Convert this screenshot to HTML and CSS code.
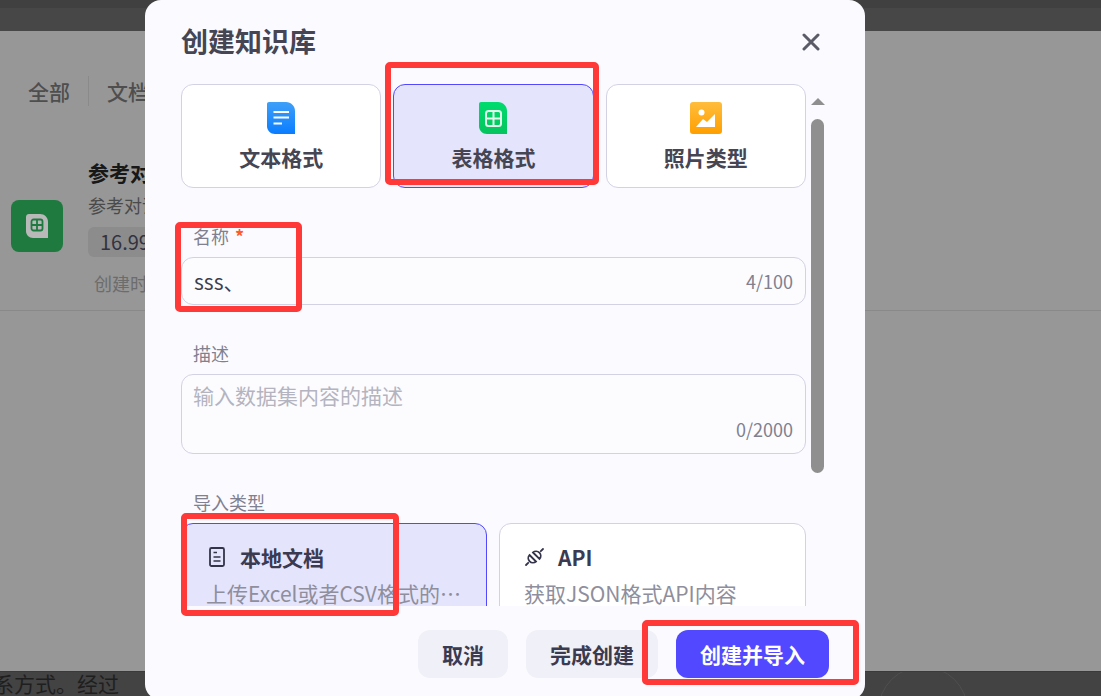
FILE: index.html
```html
<!DOCTYPE html>
<html lang="zh">
<head>
<meta charset="utf-8">
<title>创建知识库</title>
<link rel="stylesheet" href="styles.css">
</head>
<body>
<div class="stage">
  <div class="page">
    <div class="page-top"></div>
    <div class="page-panel">
      <div class="tabs">
        <span class="tab">全部</span>
        <span class="tab-sep"></span>
        <span class="tab">文档</span>
      </div>
      <div class="kb-row">
        <div class="kb-icon">
          <svg width="22" height="24" viewBox="0 0 22 24">
            <path d="M3 0H14C18.500 0 22 3.500 22 8V24H7C3 24 0 21 0 17V3C0 1.300 1.300 0 3 0Z" fill="#b9b9b9"/>
            <rect x="5.500" y="5.500" width="11" height="11" rx="2" fill="none" stroke="#1f7a3f" stroke-width="1.800"/>
            <path d="M11 5.500V16.500M5.500 11H16.500" stroke="#1f7a3f" stroke-width="1.800"/>
          </svg>
        </div>
        <div class="kb-info">
          <div class="kb-name">参考对话</div>
          <div class="kb-desc">参考对话</div>
          <div class="kb-size">16.99</div>
          <div class="kb-date">创建时间</div>
        </div>
      </div>
    </div>
    <div class="page-bottom">
      <span class="bottom-text">系方式。经过</span>
      <span class="bottom-ring"></span>
    </div>
  </div>

  <div class="dialog">
    <header class="dlg-head">
      <h1 class="dlg-title">创建知识库</h1>
      <svg class="dlg-close" width="18" height="18" viewBox="0 0 18 18"><path d="M2 2L16 16M16 2L2 16" stroke="#5b5b68" stroke-width="3" stroke-linecap="round"/></svg>
    </header>

    <div class="dlg-scroll">
      <div class="scroll-content">
        <div class="format-grid">
          <div class="format-card">
            <svg width="28" height="32" viewBox="0 0 28 32">
              <defs><linearGradient id="gb" x1="0" y1="0" x2="0" y2="1"><stop offset="0" stop-color="#3ea0f8"/><stop offset="1" stop-color="#0a7cff"/></linearGradient></defs>
              <path d="M2 0H19C24 0 28 4 28 9V32H8C3.500 32 0 28.500 0 24V2C0 .9 .9 0 2 0Z" fill="url(#gb)"/>
              <path d="M6.500 10H22M6.500 15.500H22M6.500 21.500H15" stroke="#fff" stroke-width="2"/>
            </svg>
            <span class="format-label">文本格式</span>
          </div>
          <div class="format-card is-active">
            <svg width="28" height="32" viewBox="0 0 28 32">
              <defs><linearGradient id="gg" x1="0" y1="0" x2="0" y2="1"><stop offset="0" stop-color="#00dc6e"/><stop offset="1" stop-color="#05c45e"/></linearGradient></defs>
              <path d="M2 0H19C24 0 28 4 28 9V32H8C3.500 32 0 28.500 0 24V2C0 .9 .9 0 2 0Z" fill="url(#gg)"/>
              <rect x="7" y="9" width="15" height="15" rx="2.500" fill="none" stroke="#e2f9ec" stroke-width="2"/>
              <path d="M14.500 9V24M7 16.500H22" stroke="#e2f9ec" stroke-width="2"/>
            </svg>
            <span class="format-label">表格格式</span>
          </div>
          <div class="format-card">
            <svg width="32" height="32" viewBox="0 0 32 32">
              <defs><linearGradient id="gy" x1="0" y1="0" x2="0" y2="1"><stop offset="0" stop-color="#ffbd3c"/><stop offset="1" stop-color="#ff9f00"/></linearGradient></defs>
              <rect width="32" height="32" rx="3" fill="url(#gy)"/>
              <circle cx="11.500" cy="10.500" r="3" fill="#fff"/>
              <path d="M6 25L13 17L17 20L25 12V25Z" fill="#fff"/>
            </svg>
            <span class="format-label">照片类型</span>
          </div>
        </div>

        <div class="field field-name">
          <div class="field-label">名称 <span class="req">*</span></div>
          <div class="input">
            <span class="input-text">sss、</span>
            <span class="count">4/100</span>
          </div>
        </div>

        <div class="field field-desc">
          <div class="field-label">描述</div>
          <div class="textarea">
            <span class="placeholder">输入数据集内容的描述</span>
            <span class="count count-end">0/2000</span>
          </div>
        </div>

        <div class="field field-import">
          <div class="field-label">导入类型</div>
          <div class="import-grid">
            <div class="import-card is-active">
              <div class="import-title">
                <svg width="21" height="22" viewBox="0 0 21 22"><rect x="4" y="2" width="14" height="18" rx="1.500" fill="none" stroke="#33334a" stroke-width="1.800"/><path d="M7.500 6.500H11M7.500 11H14.500M7.500 15H14.500" stroke="#33334a" stroke-width="1.600"/></svg>
                <span>本地文档</span>
              </div>
              <div class="import-desc">上传Excel或者CSV格式的…</div>
            </div>
            <div class="import-card">
              <div class="import-title">
                <svg width="21" height="20" viewBox="0 0 21 20" fill="none" stroke="#33334a" stroke-width="1.800" stroke-linecap="round"><path d="M2 18L4.200 15.800M16.800 4.200L19 2"/><path d="M5.500 8L12 14.500A4.600 4.600 0 0 1 5.500 8Z"/><path d="M9 5.500L15.500 12A4.600 4.600 0 0 0 9 5.500Z"/></svg>
                <span>API</span>
              </div>
              <div class="import-desc">获取JSON格式API内容</div>
            </div>
          </div>
        </div>
      </div>
      <div class="scrollbar">
        <span class="scroll-arrow"></span>
        <span class="scroll-thumb"></span>
      </div>
    </div>

    <footer class="dlg-foot">
      <button class="btn btn-cancel">取消</button>
      <button class="btn btn-finish">完成创建</button>
      <button class="btn btn-primary">创建并导入</button>
    </footer>
  </div>

  <span class="mark mark-format"></span>
  <span class="mark mark-name"></span>
  <span class="mark mark-local"></span>
  <span class="mark mark-submit"></span>
</div>
</body>
</html>
```

FILE: styles.css
```css
* { box-sizing: border-box; }
html, body { margin: 0; height: 100%; }
body {
  font-family: "Noto Sans CJK SC", "Noto Sans", sans-serif;
  overflow: hidden;
  background: #434343;
}
.stage { position: relative; width: 1101px; height: 696px; overflow: hidden; }

/* dimmed page behind the dialog */
.page { display: flex; flex-direction: column; height: 100%; }
.page-top { height: 31px; background: #474747; border-top: 8px solid #404040; flex: none; }
.page-panel { flex: 1; background: #979797; padding-top: 42px; }
.tabs { display: flex; align-items: center; height: 36px; padding-left: 28px; color: #4e4e4e; font-size: 21px; font-weight: 500; white-space: nowrap; }
.tab-sep { width: 1px; height: 30px; background: #8a8a8a; margin: 0 18px 0 18px; }
.kb-row { display: flex; align-items: center; margin-top: 37px; padding-left: 11px; height: 165px; border-bottom: 1px solid #898989; }
.kb-icon { width: 52px; height: 52px; margin-bottom: 4px; border-radius: 8px; background: #1f7a3f; display: flex; align-items: center; justify-content: center; flex: none; }
.kb-info { margin: 0 0 2px 25px; display: flex; flex-direction: column; align-items: flex-start; white-space: nowrap; }
.kb-name { font-size: 21px; font-weight: 700; color: #181818; line-height: 28px; }
.kb-desc { font-size: 18px; color: #4a4a4a; line-height: 26px; margin-top: 6px; }
.kb-size { font-size: 20px; color: #333340; background: #8c8c8c; border-radius: 6px; width: 80px; height: 30px; line-height: 30px; padding-left: 12px; margin-top: 9px; }
.kb-date { font-size: 18px; color: #6c6c6c; line-height: 26px; margin: 13px 0 0 6px; }
.page-bottom { position: relative; height: 25px; flex: none; background: #434343; color: #1f1f1f; font-size: 21px; line-height: 22px; white-space: nowrap; border-top: 1px solid #3a3a3a; overflow: hidden; }
.bottom-text { display: block; margin-left: -7px; }
.bottom-ring { position: absolute; left: 878px; top: -6px; width: 90px; height: 90px; border: 1px solid #4f4f4f; border-radius: 50%; }

/* dialog */
.dialog {
  position: absolute; left: 145px; top: 0; width: 720px; height: 700px;
  background: #fbfbff; border-radius: 16px;
  display: flex; flex-direction: column;
}
.dlg-head { height: 84px; flex: none; padding: 0 45px 0 36px; display: flex; justify-content: space-between; align-items: center; }
.dlg-title { margin: -2px 0 0; font-size: 27px; font-weight: 700; color: #454553; line-height: 40px; }
.dlg-close { flex: none; }
.dlg-scroll { height: 522px; flex: none; display: flex; padding-left: 36px; overflow: hidden; }
.scroll-content { width: 625px; flex: none; }
.scrollbar { margin-left: 5px; width: 13px; display: flex; flex-direction: column; align-items: center; padding-top: 14px; }
.scroll-arrow { width: 0; height: 0; border: 7.500px solid transparent; border-top: 0; border-bottom: 7px solid #8f8f8f; }
.scroll-thumb { width: 13px; height: 354px; margin-top: 14px; border-radius: 7px; background: #8f8f8f; }

.format-grid { display: grid; grid-template-columns: repeat(3, 1fr); gap: 12px; }
.format-card {
  height: 104px; border: 1px solid #d2d2e4; border-radius: 12px; background: #fff;
  display: flex; flex-direction: column; align-items: center; justify-content: flex-start; padding-top: 17px;
}
.format-label { font-size: 21px; font-weight: 700; color: #454553; line-height: 30px; margin-top: 8px; }
.format-card.is-active { background: #e4e4fc; border-color: #5148ff; }

.field-label { font-size: 18px; color: #80808f; line-height: 26px; padding-left: 12px; margin-bottom: 8px; }
.req { color: #ff5a2c; font-weight: 700; margin-left: 2px; }
.field-name, .field-desc, .field-import { margin-top: 35px; }
.input {
  height: 48px; border: 1px solid #d2d2e4; border-radius: 12px; background: #fcfcff;
  display: flex; align-items: center; justify-content: space-between; padding: 0 12px;
}
.input-text { font-size: 21px; color: #3e3e4c; line-height: 30px; margin-top: -1px; }
.count { font-size: 18px; color: #80808f; }
.textarea {
  height: 80px; border: 1px solid #d2d2e4; border-radius: 12px; background: #fcfcff;
  display: flex; flex-direction: column; padding: 5px 12px 5px 11px;
}
.placeholder { font-size: 21px; line-height: 30px; color: #b4b4c0; }
.count-end { align-self: flex-end; line-height: 26px; margin-top: 6px; }

.import-grid { display: grid; grid-template-columns: 306px 1fr; gap: 12px; }
.import-card { height: 120px; border: 1px solid #d2d2e4; border-radius: 12px; background: #fff; padding: 18px 24px 0; }
.import-card.is-active { background: #e4e4fc; border-color: #5148ff; }
.import-title { display: flex; align-items: center; gap: 13px; font-size: 21px; font-weight: 700; color: #3a3a50; line-height: 30px; }
.import-desc { font-size: 21px; color: #8e8e9c; line-height: 30px; margin-top: 6px; white-space: nowrap; }

.dlg-foot { flex: none; display: flex; justify-content: flex-end; gap: 18px; padding: 24px 36px 0 0; }
.btn { height: 48px; border: 0; border-radius: 12px; background: #f0f0f8; color: #3a3a50; font-family: inherit; font-size: 21px; font-weight: 700; padding: 0; }
.btn-cancel { width: 90px; }
.btn-finish { width: 132px; }
.btn-primary { width: 153px; background: #5148ff; color: #fff; }

/* red annotation boxes drawn over the screenshot */
.mark { position: absolute; border: 6px solid #ff3838; border-radius: 5px; }
.mark-format { left: 385px; top: 62px; width: 214px; height: 123px; }
.mark-name { left: 175px; top: 222px; width: 127px; height: 90px; }
.mark-local { left: 181px; top: 513px; width: 218px; height: 103px; }
.mark-submit { left: 642px; top: 620px; width: 217px; height: 65px; }
```
